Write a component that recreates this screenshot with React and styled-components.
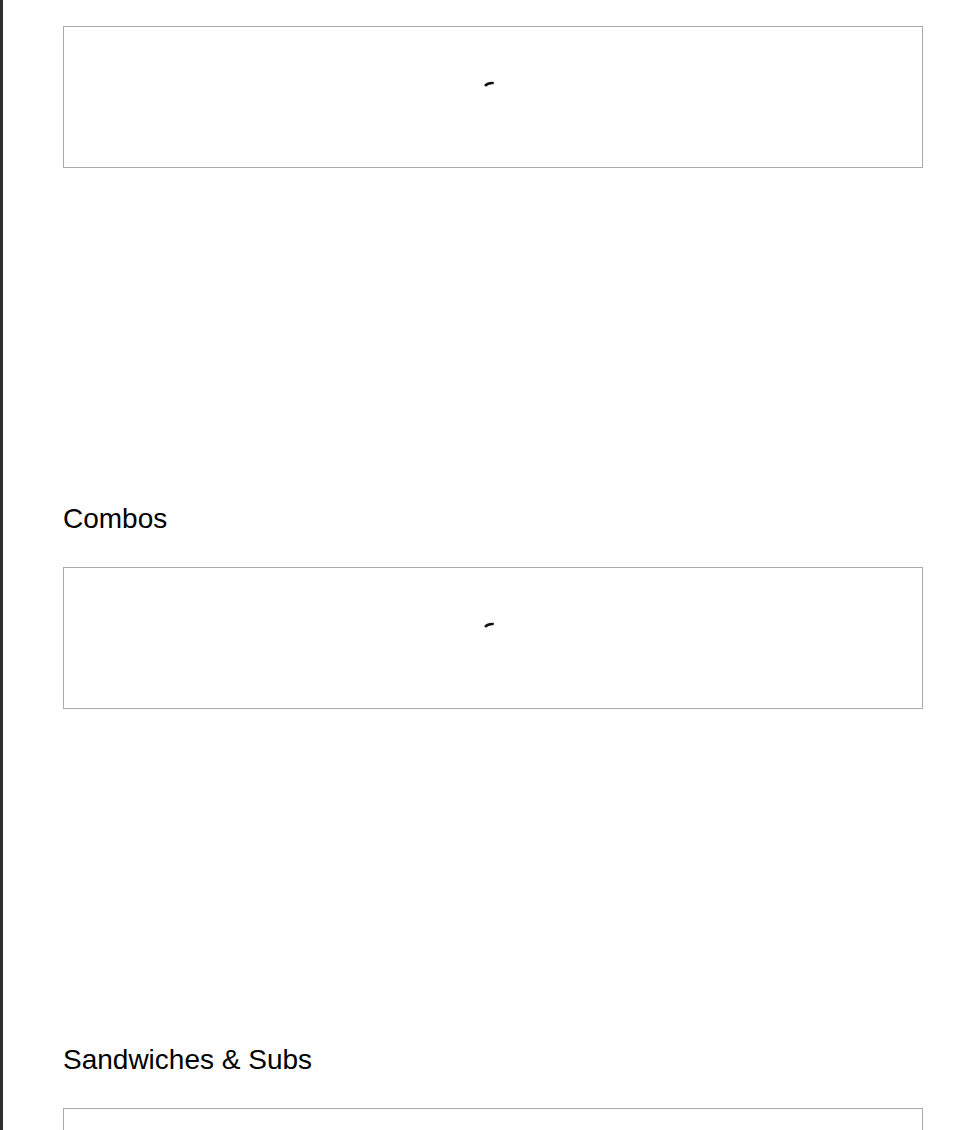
import React from "react";
import styled, { createGlobalStyle } from "styled-components";

const Global = createGlobalStyle`
  html, body { margin: 0; padding: 0; background: #fff; }
  body { font-family: "Liberation Sans", Arial, sans-serif; color: #000; }
`;

const Page = styled.div`
  min-height: 1130px;
  border-left: 3px solid #2e2e2e;
  padding: 26px 43px 0 60px;
  box-sizing: border-box;
`;

const Section = styled.section`
  display: flex;
  flex-direction: column;
  margin-bottom: 335px;
`;

const Heading = styled.h2`
  margin: 0 0 32px;
  font-size: 28px;
  font-weight: 400;
  line-height: 32px;
`;

const LoadingBox = styled.div`
  box-sizing: border-box;
  height: 142px;
  border: 1px solid #aaa;
  display: flex;
  align-items: center;
  justify-content: center;
  padding: 0 2px 8px 0;
`;

const Spinner = styled.svg`
  width: 24px;
  height: 24px;
  display: block;
`;

const Loader = () => (
  <Spinner viewBox="0 0 24 24" fill="none">
    <path
      d="M4.93 4.93 A10 10 0 0 1 13.74 2.15"
      stroke="#111"
      strokeWidth="2.4"
      strokeLinecap="butt"
    />
  </Spinner>
);

const sections = [null, "Combos", "Sandwiches & Subs"];

export default function App() {
  return (
    <>
      <Global />
      <Page>
        {sections.map((title, i) => (
          <Section key={i}>
            {title && <Heading>{title}</Heading>}
            <LoadingBox>
              <Loader />
            </LoadingBox>
          </Section>
        ))}
      </Page>
    </>
  );
}
